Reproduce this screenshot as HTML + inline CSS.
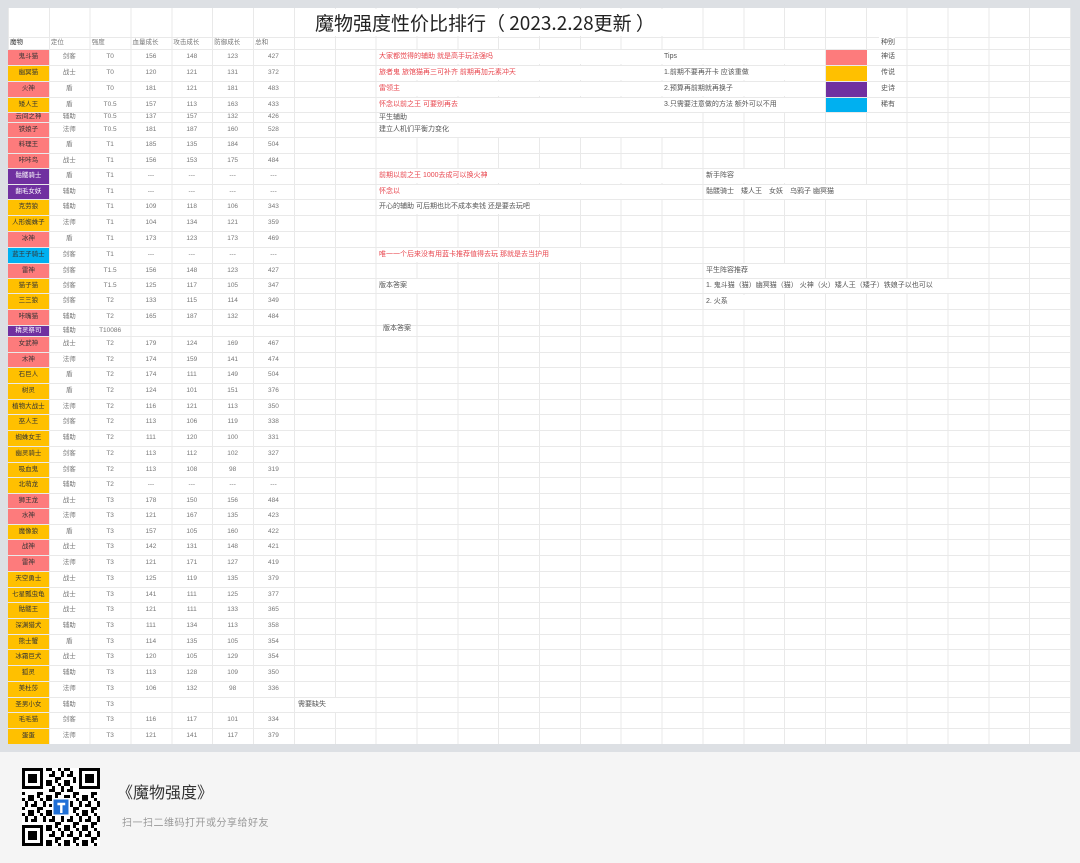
<!DOCTYPE html>
<html><head><meta charset="utf-8">
<style>
*{margin:0;padding:0;box-sizing:border-box}
html,body{width:1080px;height:863px;overflow:hidden;background:#f5f5f5;font-family:"Liberation Sans","Noto Sans CJK SC",sans-serif}
#top{position:absolute;left:0;top:0;width:1080px;height:752px;background:#dde0e4}
#sheet{position:absolute;left:8px;top:8px;width:1063px;height:736px;background-color:#fff;
background-image:repeating-linear-gradient(to right,#e9e9e9 0,#e9e9e9 1px,transparent 1px,transparent 40.85px);background-position:0 0}
.r{position:absolute;left:8px;width:1063px;border-top:1px solid #e9e9e9;display:flex}
.r i{font-style:normal;width:40.85px;flex:none;height:100%;font-size:6.5px;line-height:1;color:#777;display:flex;align-items:center;justify-content:center;white-space:nowrap;overflow:hidden}
.r i:first-child{color:#333}
.R{background:#fd7b7c}.Y{background:#ffc000}.P{background:#7030a0;color:#fff!important}.B{background:#00b0f0}
.h i{justify-content:flex-start;padding-left:2px}
.n{position:absolute;font-size:7px;color:#555;background:#fff;white-space:nowrap;line-height:14px;padding-left:2px}
.red{color:#e8474f}
</style></head><body>
<div id="top"></div>
<div id="sheet"></div>
<div style="position:absolute;left:8px;top:37px;width:1063px;height:707px;border-top:1px solid #e9e9e9"></div>
<div style="position:absolute;left:300px;top:9px;width:390px;height:27px;background:#fff"></div>
<div style="position:absolute;left:315px;top:9px;font-family:'Noto Sans CJK SC',sans-serif;font-size:19px;line-height:28px;color:#222">魔物强度性价比排行（ 2023.2.28更新 ）</div>

<div class="r h" style="top:37px;height:12px"><i>魔物</i><i>定位</i><i>强度</i><i>血量成长</i><i>攻击成长</i><i>防御成长</i><i>总和</i></div>
<div class="r" style="top:49px;height:16px"><i class="R">鬼斗猫</i><i>剑客</i><i>T0</i><i>156</i><i>148</i><i>123</i><i>427</i></div>
<div class="r" style="top:65px;height:16px"><i class="Y">幽冥猫</i><i>战士</i><i>T0</i><i>120</i><i>121</i><i>131</i><i>372</i></div>
<div class="r" style="top:81px;height:16px"><i class="R">火神</i><i>盾</i><i>T0</i><i>181</i><i>121</i><i>181</i><i>483</i></div>
<div class="r" style="top:97px;height:15px"><i class="Y">矮人王</i><i>盾</i><i>T0.5</i><i>157</i><i>113</i><i>163</i><i>433</i></div>
<div class="r" style="top:112px;height:10px"><i class="R">云间之神</i><i>辅助</i><i>T0.5</i><i>137</i><i>157</i><i>132</i><i>426</i></div>
<div class="r" style="top:122px;height:15px"><i class="R">铁娘子</i><i>法师</i><i>T0.5</i><i>181</i><i>187</i><i>160</i><i>528</i></div>
<div class="r" style="top:137px;height:16px"><i class="R">料理王</i><i>盾</i><i>T1</i><i>185</i><i>135</i><i>184</i><i>504</i></div>
<div class="r" style="top:153px;height:15px"><i class="R">咔咔鸟</i><i>战士</i><i>T1</i><i>156</i><i>153</i><i>175</i><i>484</i></div>
<div class="r" style="top:168px;height:16px"><i class="P">骷髅骑士</i><i>盾</i><i>T1</i><i>---</i><i>---</i><i>---</i><i>---</i></div>
<div class="r" style="top:184px;height:15px"><i class="P">翻毛女妖</i><i>辅助</i><i>T1</i><i>---</i><i>---</i><i>---</i><i>---</i></div>
<div class="r" style="top:199px;height:16px"><i class="Y">克劳狼</i><i>辅助</i><i>T1</i><i>109</i><i>118</i><i>106</i><i>343</i></div>
<div class="r" style="top:215px;height:16px"><i class="Y">人形蜘蛛子</i><i>法师</i><i>T1</i><i>104</i><i>134</i><i>121</i><i>359</i></div>
<div class="r" style="top:231px;height:16px"><i class="R">冰神</i><i>盾</i><i>T1</i><i>173</i><i>123</i><i>173</i><i>469</i></div>
<div class="r" style="top:247px;height:16px"><i class="B">蓝王子骑士</i><i>剑客</i><i>T1</i><i>---</i><i>---</i><i>---</i><i>---</i></div>
<div class="r" style="top:263px;height:15px"><i class="R">雷神</i><i>剑客</i><i>T1.5</i><i>156</i><i>148</i><i>123</i><i>427</i></div>
<div class="r" style="top:278px;height:15px"><i class="Y">猫子猫</i><i>剑客</i><i>T1.5</i><i>125</i><i>117</i><i>105</i><i>347</i></div>
<div class="r" style="top:293px;height:16px"><i class="Y">三三狼</i><i>剑客</i><i>T2</i><i>133</i><i>115</i><i>114</i><i>349</i></div>
<div class="r" style="top:309px;height:16px"><i class="R">咔嘴猫</i><i>辅助</i><i>T2</i><i>165</i><i>187</i><i>132</i><i>484</i></div>
<div class="r" style="top:325px;height:11px"><i class="P">精灵祭司</i><i>辅助</i><i>T10086</i><i></i><i></i><i></i><i></i></div>
<div class="r" style="top:336px;height:16px"><i class="R">女武神</i><i>战士</i><i>T2</i><i>179</i><i>124</i><i>169</i><i>467</i></div>
<div class="r" style="top:352px;height:15px"><i class="R">木神</i><i>法师</i><i>T2</i><i>174</i><i>159</i><i>141</i><i>474</i></div>
<div class="r" style="top:367px;height:16px"><i class="Y">石巨人</i><i>盾</i><i>T2</i><i>174</i><i>111</i><i>149</i><i>504</i></div>
<div class="r" style="top:383px;height:16px"><i class="Y">树灵</i><i>盾</i><i>T2</i><i>124</i><i>101</i><i>151</i><i>376</i></div>
<div class="r" style="top:399px;height:15px"><i class="Y">植物大战士</i><i>法师</i><i>T2</i><i>116</i><i>121</i><i>113</i><i>350</i></div>
<div class="r" style="top:414px;height:16px"><i class="Y">巫人王</i><i>剑客</i><i>T2</i><i>113</i><i>106</i><i>119</i><i>338</i></div>
<div class="r" style="top:430px;height:16px"><i class="Y">蜘蛛女王</i><i>辅助</i><i>T2</i><i>111</i><i>120</i><i>100</i><i>331</i></div>
<div class="r" style="top:446px;height:16px"><i class="Y">幽灵骑士</i><i>剑客</i><i>T2</i><i>113</i><i>112</i><i>102</i><i>327</i></div>
<div class="r" style="top:462px;height:15px"><i class="Y">吸血鬼</i><i>剑客</i><i>T2</i><i>113</i><i>108</i><i>98</i><i>319</i></div>
<div class="r" style="top:477px;height:16px"><i class="Y">北萌龙</i><i>辅助</i><i>T2</i><i>---</i><i>---</i><i>---</i><i>---</i></div>
<div class="r" style="top:493px;height:15px"><i class="R">狮王龙</i><i>战士</i><i>T3</i><i>178</i><i>150</i><i>156</i><i>484</i></div>
<div class="r" style="top:508px;height:16px"><i class="R">水神</i><i>法师</i><i>T3</i><i>121</i><i>167</i><i>135</i><i>423</i></div>
<div class="r" style="top:524px;height:15px"><i class="Y">魔像狼</i><i>盾</i><i>T3</i><i>157</i><i>105</i><i>160</i><i>422</i></div>
<div class="r" style="top:539px;height:16px"><i class="R">战神</i><i>战士</i><i>T3</i><i>142</i><i>131</i><i>148</i><i>421</i></div>
<div class="r" style="top:555px;height:16px"><i class="R">雷神</i><i>法师</i><i>T3</i><i>121</i><i>171</i><i>127</i><i>419</i></div>
<div class="r" style="top:571px;height:16px"><i class="Y">天空勇士</i><i>战士</i><i>T3</i><i>125</i><i>119</i><i>135</i><i>379</i></div>
<div class="r" style="top:587px;height:15px"><i class="Y">七星瓢虫龟</i><i>战士</i><i>T3</i><i>141</i><i>111</i><i>125</i><i>377</i></div>
<div class="r" style="top:602px;height:16px"><i class="Y">骷髅王</i><i>战士</i><i>T3</i><i>121</i><i>111</i><i>133</i><i>365</i></div>
<div class="r" style="top:618px;height:16px"><i class="Y">深渊猎犬</i><i>辅助</i><i>T3</i><i>111</i><i>134</i><i>113</i><i>358</i></div>
<div class="r" style="top:634px;height:15px"><i class="Y">熊士蟹</i><i>盾</i><i>T3</i><i>114</i><i>135</i><i>105</i><i>354</i></div>
<div class="r" style="top:649px;height:16px"><i class="Y">冰霜巨犬</i><i>战士</i><i>T3</i><i>120</i><i>105</i><i>129</i><i>354</i></div>
<div class="r" style="top:665px;height:16px"><i class="Y">狐灵</i><i>辅助</i><i>T3</i><i>113</i><i>128</i><i>109</i><i>350</i></div>
<div class="r" style="top:681px;height:16px"><i class="Y">美杜莎</i><i>法师</i><i>T3</i><i>106</i><i>132</i><i>98</i><i>336</i></div>
<div class="r" style="top:697px;height:15px"><i class="Y">圣男小女</i><i>辅助</i><i>T3</i><i></i><i></i><i></i><i></i></div>
<div class="r" style="top:712px;height:16px"><i class="Y">毛毛猫</i><i>剑客</i><i>T3</i><i>116</i><i>117</i><i>101</i><i>334</i></div>
<div class="r" style="top:728px;height:16px"><i class="Y">蛋蛋</i><i>法师</i><i>T3</i><i>121</i><i>141</i><i>117</i><i>379</i></div>

<div style="position:absolute;left:826px;top:50px;width:41px;height:15px;background:#fd7b7c"></div>
<div style="position:absolute;left:826px;top:66px;width:41px;height:15px;background:#ffc000"></div>
<div style="position:absolute;left:826px;top:82px;width:41px;height:15px;background:#7030a0"></div>
<div style="position:absolute;left:826px;top:98px;width:41px;height:14px;background:#00b0f0"></div>
<div class="n" style="left:879px;top:37px;line-height:12px">种别</div>
<div class="n" style="left:879px;top:50px">神话</div>
<div class="n" style="left:879px;top:66px">传说</div>
<div class="n" style="left:879px;top:82px">史诗</div>
<div class="n" style="left:879px;top:98px">稀有</div>

<div class="n red" style="left:377px;top:50px;width:285px">大家都觉得的辅助 就是高手玩法强吗</div>
<div class="n red" style="left:377px;top:66px;width:285px">旅者鬼 旅馆猫再三可补齐 前期再加元素冲天</div>
<div class="n red" style="left:377px;top:82px;width:285px">雷领主</div>
<div class="n red" style="left:377px;top:98px;width:285px">怀念以前之王 可要别再去</div>
<div class="n" style="left:377px;top:113px;width:320px;line-height:9px">平生辅助</div>
<div class="n" style="left:377px;top:123px;width:320px">建立人机们平衡力变化</div>
<div class="n red" style="left:377px;top:169px;width:325px">前期以前之王 1000去成可以换火神</div>
<div class="n red" style="left:377px;top:185px;width:325px">怀念以</div>
<div class="n" style="left:377px;top:200px;width:200px">开心的辅助 可后期也比不成本卖钱 还是要去玩吧</div>
<div class="n red" style="left:377px;top:248px;width:230px">唯一一个后来没有用蓝卡推荐值得去玩 那就是去当护用</div>
<div class="n" style="left:377px;top:279px;width:60px">版本答案</div>
<div class="n" style="left:381px;top:322px;line-height:13px;background:transparent">版本答案</div>
<div class="n" style="left:296px;top:698px;width:40px">需要缺失</div>
<div class="n" style="left:662px;top:50px;width:162px">Tips</div>
<div class="n" style="left:662px;top:66px;width:162px">1.前期不要再开卡 应该重做</div>
<div class="n" style="left:662px;top:82px;width:162px">2.预算再前期就再换子</div>
<div class="n" style="left:662px;top:98px;width:162px">3.只需要注意做的方法 额外可以不用</div>
<div class="n" style="left:704px;top:169px;width:120px">新手阵容</div>
<div class="n" style="left:704px;top:185px;width:200px">骷髅骑士　矮人王　女妖　乌鸦子 幽冥猫</div>
<div class="n" style="left:704px;top:264px;width:120px">平生阵容推荐</div>
<div class="n" style="left:704px;top:279px;width:245px">1. 鬼斗猫（猫）幽冥猫（猫） 火神（火）矮人王（矮子）铁娘子以也可以</div>
<div class="n" style="left:704px;top:295px;width:80px">2. 火系</div>

<svg style="position:absolute;left:22px;top:768px" width="78" height="78" viewBox="0 0 26 26">
<defs><pattern id="q" width="6" height="5" patternUnits="userSpaceOnUse">
<rect x="0" y="0" width="1" height="1"/><rect x="2" y="0" width="2" height="1"/><rect x="1" y="1" width="1" height="2"/><rect x="4" y="1" width="1" height="1"/><rect x="3" y="2" width="2" height="1"/><rect x="0" y="3" width="1" height="1"/><rect x="5" y="3" width="1" height="2"/><rect x="2" y="4" width="2" height="1"/></pattern></defs>
<rect width="26" height="26" fill="#fff"/>
<rect x="0" y="0" width="26" height="26" fill="url(#q)"/>
<g fill="#fff"><rect x="0" y="0" width="8" height="8"/><rect x="18" y="0" width="8" height="8"/><rect x="0" y="18" width="8" height="8"/></g>
<g fill="none" stroke="#000"><rect x="0.5" y="0.5" width="6" height="6"/><rect x="19.5" y="0.5" width="6" height="6"/><rect x="0.5" y="19.5" width="6" height="6"/></g>
<rect x="2" y="2" width="3" height="3"/><rect x="21" y="2" width="3" height="3"/><rect x="2" y="21" width="3" height="3"/>
<rect x="10" y="10" width="6" height="6" fill="#fff"/>
<rect x="10.5" y="10.5" width="5" height="5" fill="#1f6fd6"/>
<path d="M11.8 12h2.6M13.1 12v3" stroke="#fff" stroke-width="0.8"/>
</svg>
<div style="position:absolute;left:117px;top:779px;font-family:'Noto Sans CJK SC',sans-serif;font-size:16px;color:#333;line-height:24px">《魔物强度》</div>
<div style="position:absolute;left:122px;top:815px;font-family:'Noto Sans CJK SC',sans-serif;font-size:10px;color:#999;line-height:14px;letter-spacing:0.5px">扫一扫二维码打开或分享给好友</div>
</body></html>
